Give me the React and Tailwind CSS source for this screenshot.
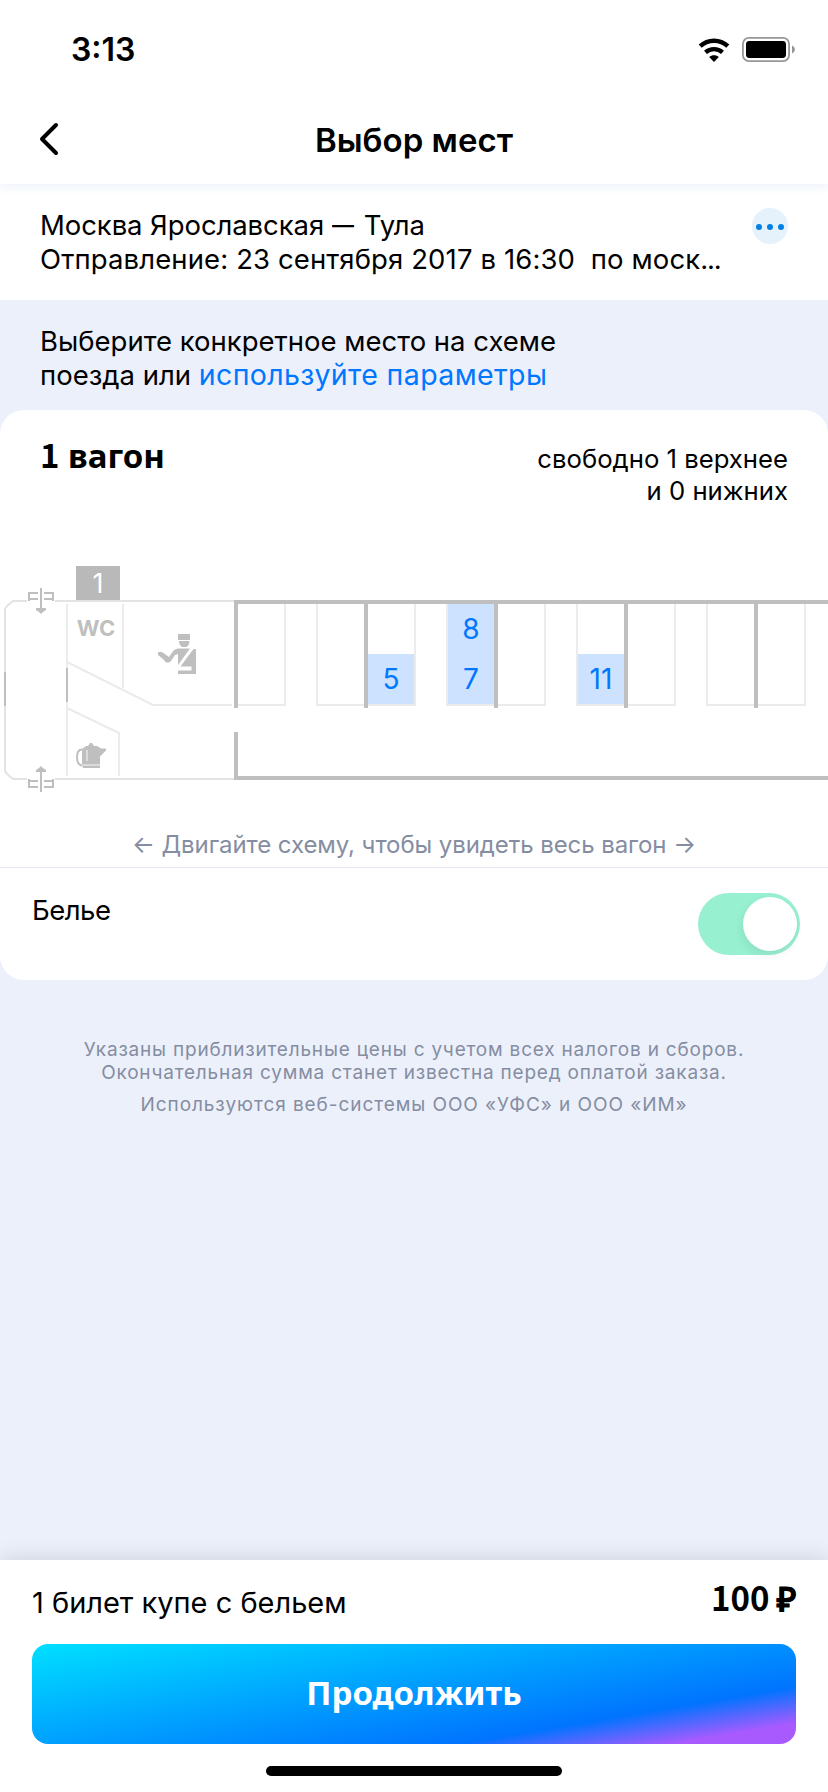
import React from "react";

const WALL = "#bfbfbf";
const LINE = "#ebebeb";
const SEAT = "#cce2ff";

function BatteryIcon() {
  return (
    <svg className="block h-[25px] w-[53px]" viewBox="0 0 53 25" fill="none">
      <rect x="0.9" y="0.9" width="46.2" height="23.2" rx="6" stroke="#979797" strokeWidth="1.8" />
      <rect x="4" y="4" width="40" height="17" rx="3.4" fill="#000" />
      <path d="M50 8.500c1.800.8 2.900 2.300 2.900 4s-1.100 3.200-2.900 4z" fill="#979797" />
    </svg>
  );
}

function WifiIcon() {
  return (
    <svg className="block h-[24px] w-[32px]" viewBox="0 0 32 24" fill="none">
      <path d="M2.200 8.200C9.900 .9 22.100 .9 29.800 8.200" stroke="#000" strokeWidth="4.400" />
      <path d="M7.500 14.300c4.800-4.300 12.200-4.300 17 0" stroke="#000" strokeWidth="4.300" />
      <path d="M16 24l-4.800-4.900c2.700-2.500 6.900-2.500 9.600 0z" fill="#000" />
    </svg>
  );
}

function Door({ flip }) {
  return (
    <g transform={flip ? "translate(0 1380) scale(1 -1)" : undefined} stroke={WALL} strokeWidth="2" fill="none">
      <path d="M38 593H29V601M38 599H29M44 593H53V601M44 599H53" />
      <path d="M41 588V611" />
      <path d="M36 608h10v2l-3 2-2 2-2-2-3-2z" fill={WALL} stroke="none" />
    </g>
  );
}

function Carriage() {
  const walls = [366, 496, 626, 756];
  return (
    <svg className="block h-[260px] w-[828px]" viewBox="0 550 828 260" fill="none">
      <path
        d="M236 601H13C11 602.500 6.500 606 5 609V771C6.500 774 11 777.500 13 779H236"
        stroke="#e3e3e3"
        strokeWidth="2"
      />
      <path d="M67 604V776M123 604V688M67 662L153 705H232M67 708L119 733V776" stroke={LINE} strokeWidth="2" />
      <path d="M5 672V706M67 668V702" stroke={WALL} strokeWidth="2" />
      <path d="M27 601H55M27 779H55" stroke="#fff" strokeWidth="2.500" />
      <Door />
      <Door flip />
      <rect x="76" y="566" width="44" height="34" fill="#b9b9b9" />
      <text x="98" y="593" textAnchor="middle" fill="#fff" className="font-['Inter'] text-[27px]">1</text>
      <text x="96" y="636" textAnchor="middle" fill={WALL} className="font-['Inter'] text-[22px] font-bold">WC</text>

      <g fill={WALL}>
        <path d="M178 634h12v6h-12zM179 641h10.500c0 2.500-1 4.500-3 6h-4.500c-2-1.500-3-3.500-3-6z" />
        <path d="M158 652h4l7 5 5-7 4-1.500h12L178 665v-11l-3 1-4 6-2 1.500h-3l-3-3.500-5-4z" />
        <path d="M196 649V674H178V670.500H191.500V666.500H180.500L193.500 649z" />
      </g>

      <path d="M82 749l4-3h2l2-3h2l2 3h3l4 2.500h5v2l-6 6V764H82z" fill={WALL} />
      <path d="M82 765.500h18V768H83z" fill={WALL} />
      <path d="M82 764h18v1.500H82z" fill="#d9d9d9" />
      <path d="M82 749.500c-3.600 0-5 3-5 7.500s1.800 8 5 8.500" stroke={WALL} strokeWidth="2" />
      <path d="M87 750V761" stroke="#e4e4e4" strokeWidth="1.500" />

      <path d="M238 705H285V604" stroke={LINE} strokeWidth="2" />
      {walls.map((x) => (
        <path key={x} d={`M${x - 49} 604V705H${x + 49}V604`} stroke={LINE} strokeWidth="2" />
      ))}
      <rect x="368" y="654" width="46" height="50" fill={SEAT} />
      <rect x="448" y="604" width="46" height="100" fill={SEAT} />
      <rect x="578" y="654" width="46" height="50" fill={SEAT} />
      {walls.map((x) => (
        <path key={x} d={`M${x} 604V708`} stroke={WALL} strokeWidth="4" />
      ))}
      <path d="M828 602H236V708M236 732V778H828" stroke={WALL} strokeWidth="4" />
      <g fill="#0077ff" textAnchor="middle" className="font-['Inter'] text-[28px]">
        <text x="391" y="689">5</text>
        <text x="471" y="639">8</text>
        <text x="471" y="689">7</text>
        <text x="601" y="689">11</text>
      </g>
    </svg>
  );
}

export default function App() {
  return (
    <div className="flex h-[1792px] w-[828px] flex-col overflow-hidden bg-[#ecf0fa] font-['Inter',sans-serif] text-black">
      <div className="relative z-10 bg-white shadow-[0_5px_7px_rgba(60,120,200,0.07)]">
        <div className="flex h-[88px] items-center justify-between pt-[11px] pr-[33px] pl-[71px]">
          <span className="pt-px text-[32px] leading-[40px] font-semibold">3:13</span>
          <div className="flex items-center gap-[12.500px]">
            <WifiIcon />
            <BatteryIcon />
          </div>
        </div>
        <div className="grid h-[96px] grid-cols-[80px_1fr_80px] items-center">
          <svg className="mt-[6px] ml-[38px] block h-[36px] w-[22px]" viewBox="0 0 22 36" fill="none">
            <path d="M18 4L4 18l14 14" stroke="#000" strokeWidth="4" strokeLinecap="round" strokeLinejoin="round" />
          </svg>
          <h1 className="pt-[8px] text-center text-[33px] leading-[40px] font-semibold">Выбор мест</h1>
        </div>
      </div>

      <div className="flex h-[116px] justify-between bg-white pt-[24px] pr-[40px] pl-[40px]">
        <div className="text-[27.500px] leading-[34px] whitespace-pre">
          <p className="tracking-[-0.08px]">
            Москва Ярославская <span className="-mr-[3px] inline-block origin-left scale-x-[0.800]">—</span>
            <span> Тула</span>
          </p>
          <p className="tracking-[0.120px]">
            Отправление: 23 сентября 2017 в 16:30  по моск<span className="tracking-[-1.200px]">...</span>
          </p>
        </div>
        <div className="flex h-9 w-9 items-center justify-center gap-[5px] rounded-full bg-[#e5f1fb] pt-[2px]">
          <i className="h-[6px] w-[6px] rounded-full bg-[#0080e4]" />
          <i className="h-[6px] w-[6px] rounded-full bg-[#0080e4]" />
          <i className="h-[6px] w-[6px] rounded-full bg-[#0080e4]" />
        </div>
      </div>

      <div className="h-[110px] pt-[25px] pl-[40px] text-[27.500px] leading-[33px] whitespace-nowrap">
        <p>Выберите конкретное место на схеме</p>
        <p>
          поезда или{" "}
          <span className="text-[28.500px] tracking-[0.380px] text-[#0077ff]">используйте параметры</span>
        </p>
      </div>

      <div className="h-[570px] shrink-0 rounded-[24px] bg-white">
        <div className="flex h-[140px] justify-between pt-[33px] pr-[40px] pl-[40px]">
          <h2 className="-mt-[6px] text-[33px] leading-[34px] font-bold">
            <span className="font-['Noto_Sans_CJK_SC']">1</span>
            <span className="font-['Noto_Sans']"> вагон</span>
          </h2>
          <p className="text-right text-[25.700px] leading-[32px]">
            свободно 1 верхнее
            <br />и 0 нижних
          </p>
        </div>
        <Carriage />
        <div className="flex h-[58px] items-center justify-center border-b border-[#e4e6f1] pt-[12px] text-[24px] tracking-[-0.080px] text-[#858da2]">
          <span>← Двигайте схему, чтобы увидеть весь вагон →</span>
        </div>
        <div className="flex justify-between pt-[25px] pr-[28px] pl-[32px]">
          <span className="text-[27.500px] leading-[34px] tracking-[-0.500px]">Белье</span>
          <div className="flex h-[62px] w-[102px] items-center justify-end rounded-full bg-[#97f0d0] pr-[3px]">
            <div className="h-[54px] w-[54px] rounded-full bg-white shadow-[-1px_4px_10px_rgba(0,0,0,0.07)]" />
          </div>
        </div>
      </div>

      <div className="pt-[58px] text-center text-[19px] leading-[23px] tracking-[0.800px] text-[#858da2]">
        <p>Указаны приблизительные цены с учетом всех налогов и сборов.</p>
        <p>Окончательная сумма станет известна перед оплатой заказа.</p>
        <p className="mt-[9px] tracking-[0.930px]">Используются веб-системы ООО «УФС» и ООО «ИМ»</p>
      </div>

      <div className="mt-auto h-[232px] bg-white px-[32px] shadow-[0_-2px_20px_rgba(0,0,0,0.12)]">
        <div className="flex h-[84px] justify-between pt-[20px]">
          <span className="pt-[3px] text-[29px] leading-[40px]">1 билет купе с бельем</span>
          <span className="font-['Noto_Sans_CJK_SC'] text-[33px] leading-[34px] font-bold">
            100 <span className="[-webkit-text-stroke:0.800px_black]">₽</span>
          </span>
        </div>
        <button className="flex h-[100px] w-full items-center justify-center rounded-[16px] bg-[linear-gradient(170.400deg,#00e0ff_0%,#0074ff_75%,#a85aff_91%)] pb-[3px] font-['Noto_Sans'] text-[33px] font-bold text-white">
          Продолжить
        </button>
        <div className="mx-auto mt-[22px] h-[10px] w-[296px] rounded-full bg-black" />
      </div>
    </div>
  );
}
